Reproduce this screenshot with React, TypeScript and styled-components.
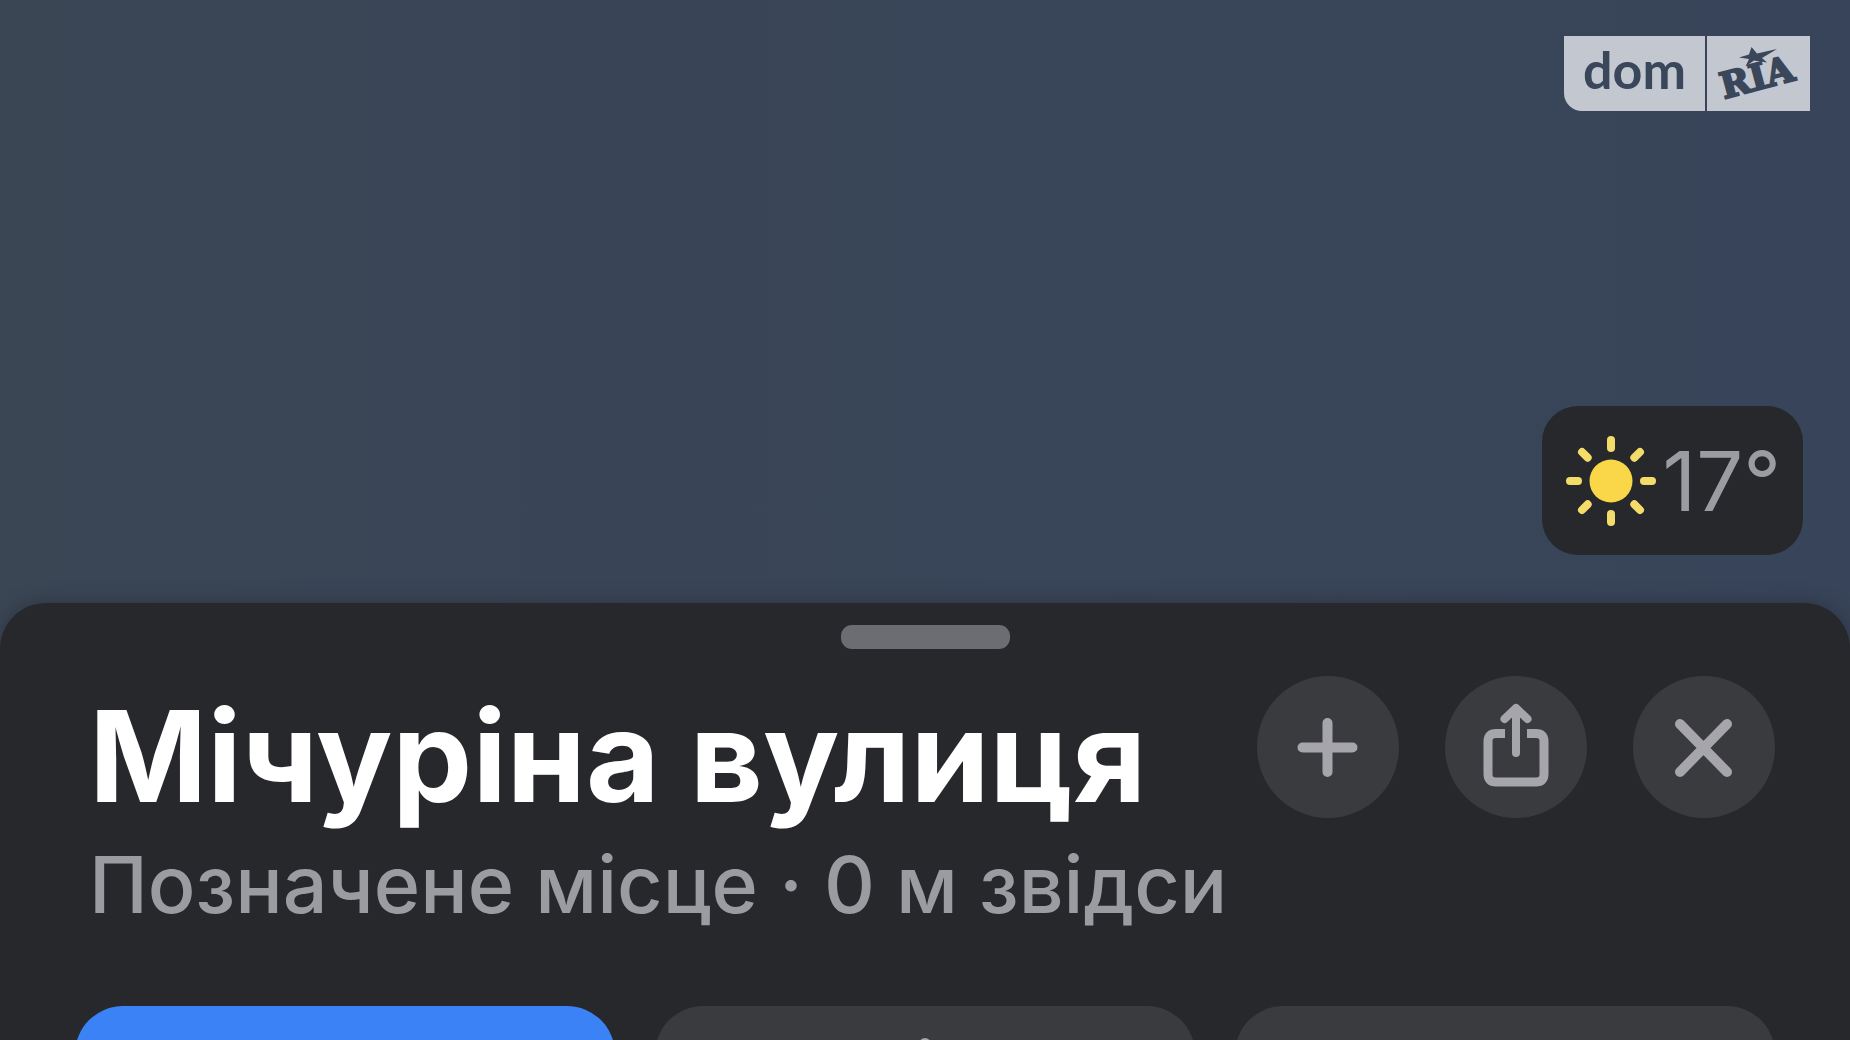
import React from "react";
import styled, { createGlobalStyle } from "styled-components";

const GlobalStyle = createGlobalStyle`
  *, *::before, *::after { box-sizing: border-box; }
  body { margin: 0; background: #27282c; }
  button { border: 0; padding: 0; font: inherit; cursor: pointer; }
`;

const Page = styled.div`
  display: flex;
  flex-direction: column;
  height: 100vh;
  overflow: hidden;
  background: linear-gradient(90deg, #3a4654 0%, #394557 35%, #384459 100%);
  font-family: Inter, "Liberation Sans", sans-serif;
`;

const MapArea = styled.main`
  flex: 1;
  display: flex;
  flex-direction: column;
  align-items: flex-end;
  justify-content: space-between;
  padding: 36px 40px 48px;
`;

const Logo = styled.a`
  display: flex;
  gap: 2px;
  color: #3a465a;
  text-decoration: none;
`;

const LogoName = styled.span`
  width: 141px;
  height: 75px;
  border-radius: 0 0 0 18px;
  background: #c3c7d0;
  font: 700 52px/66px Lato, "Open Sans", sans-serif;
  text-align: center;
`;

const LogoMark = styled.svg`
  width: 103px;
  height: 75px;
  background: #c3c7d0;
  fill: currentColor;
  font: 700 36px "DejaVu Serif", serif;
`;

const Weather = styled.div`
  display: flex;
  align-items: center;
  gap: 4px;
  height: 149px;
  margin-right: 7px;
  padding: 0 22px;
  border-radius: 36px;
  background: #27282c;
  color: #9b9ca1;
  font-size: 83px;
  line-height: 96px;
`;

const SunIcon = styled.svg`
  width: 94px;
  height: 94px;
  fill: #fad748;
  stroke: #f4dc6a;
  stroke-width: 8;
  stroke-linecap: round;
`;

const Sheet = styled.section`
  flex: 0 0 437px;
  min-height: 0;
  display: flex;
  flex-direction: column;
  padding: 22px 75px 0;
  border-radius: 46px 46px 0 0;
  background: #27282c;
  box-shadow: 0 0 18px rgba(39, 40, 52, 0.6);
`;

const Handle = styled.button`
  align-self: center;
  flex: none;
  width: 169px;
  height: 24px;
  border-radius: 11px;
  background: #6c6d73;
`;

const Header = styled.header`
  display: flex;
  justify-content: space-between;
  align-items: flex-start;
  margin-top: 27px;
`;

const Place = styled.div`
  padding: 16px 0 0 14px;
  white-space: nowrap;
`;

const Title = styled.h1`
  margin: 0;
  color: #fff;
  font-size: 127px;
  font-weight: 700;
  line-height: 128px;
`;

const Subtitle = styled.p`
  margin: 24px 0 0;
  color: #9b9ca1;
  font-size: 79px;
  font-weight: 500;
  line-height: 80px;
`;

const Actions = styled.div`
  display: flex;
  gap: 46px;
  margin-left: -200px;
`;

const RoundButton = styled.button`
  width: 142px;
  height: 142px;
  border-radius: 50%;
  background: #3a3b3e;
  color: #a5a5ab;

  svg {
    display: block;
    width: 100%;
    height: 100%;
    fill: none;
    stroke: currentColor;
    stroke-width: 10;
    stroke-linecap: round;
    stroke-linejoin: round;
  }
`;

const Cards = styled.div`
  display: grid;
  grid-template-columns: repeat(3, 1fr);
  gap: 40px;
  margin-top: 82px;
`;

const Card = styled.button<{ $primary?: boolean }>`
  display: flex;
  justify-content: center;
  height: 150px;
  padding-top: 32px;
  border-radius: 48px;
  background: ${(p) => (p.$primary ? "#3b82f7" : "#3a3b3e")};
  color: #a5a5ab;
`;

const CardIcon = styled.svg`
  width: 60px;
  height: 60px;
  fill: currentColor;
`;

const rays = [0, 45, 90, 135, 180, 225, 270, 315];

export default function App() {
  return (
    <Page>
      <GlobalStyle />
      <MapArea>
        <Logo href="#" aria-label="dom RIA">
          <LogoName>dom</LogoName>
          <LogoMark viewBox="0 0 103 75">
            <path d="M44.500 11L50 17.500L70 13L55 22L60 26.500L47 24.500L38.500 30.500L42 23L32 21.500L42 18.500Z" />
            <text transform="translate(17 63) rotate(-15)" stroke="currentColor" strokeWidth="2">
              RIA
            </text>
          </LogoMark>
        </Logo>
        <Weather>
          <SunIcon viewBox="0 0 94 94" aria-hidden="true">
            <circle cx="47" cy="47" r="21.500" stroke="none" />
            {rays.map((angle) => (
              <path key={angle} d="M47 14V6" transform={`rotate(${angle} 47 47)`} />
            ))}
          </SunIcon>
          <span>17°</span>
        </Weather>
      </MapArea>
      <Sheet>
        <Handle aria-label="Панель" />
        <Header>
          <Place>
            <Title>Мічуріна вулиця</Title>
            <Subtitle>Позначене місце · 0 м звідси</Subtitle>
          </Place>
          <Actions>
            <RoundButton aria-label="Додати">
              <svg viewBox="0 0 142 142">
                <path d="M70.500 47V96M45.500 71.500H95.500" />
              </svg>
            </RoundButton>
            <RoundButton aria-label="Поділитися">
              <svg viewBox="0 0 142 142">
                <path
                  strokeWidth="9"
                  strokeLinecap="butt"
                  d="M60 57.500H51Q43 57.500 43 65.500V98Q43 106 51 106H91Q99 106 99 98V65.500Q99 57.500 91 57.500H82"
                />
                <path strokeWidth="8" d="M71 77V33M59.500 43L71 32L82.500 43" />
              </svg>
            </RoundButton>
            <RoundButton aria-label="Закрити">
              <svg viewBox="0 0 142 142">
                <path d="M47 48L94 96M94 48L47 96" />
              </svg>
            </RoundButton>
          </Actions>
        </Header>
        <Cards>
          <Card $primary aria-label="Маршрут" />
          <Card aria-label="Завантажити">
            <CardIcon viewBox="0 0 60 60" aria-hidden="true">
              <circle cx="30" cy="6" r="6" />
            </CardIcon>
          </Card>
          <Card aria-label="Ще" />
        </Cards>
      </Sheet>
    </Page>
  );
}
